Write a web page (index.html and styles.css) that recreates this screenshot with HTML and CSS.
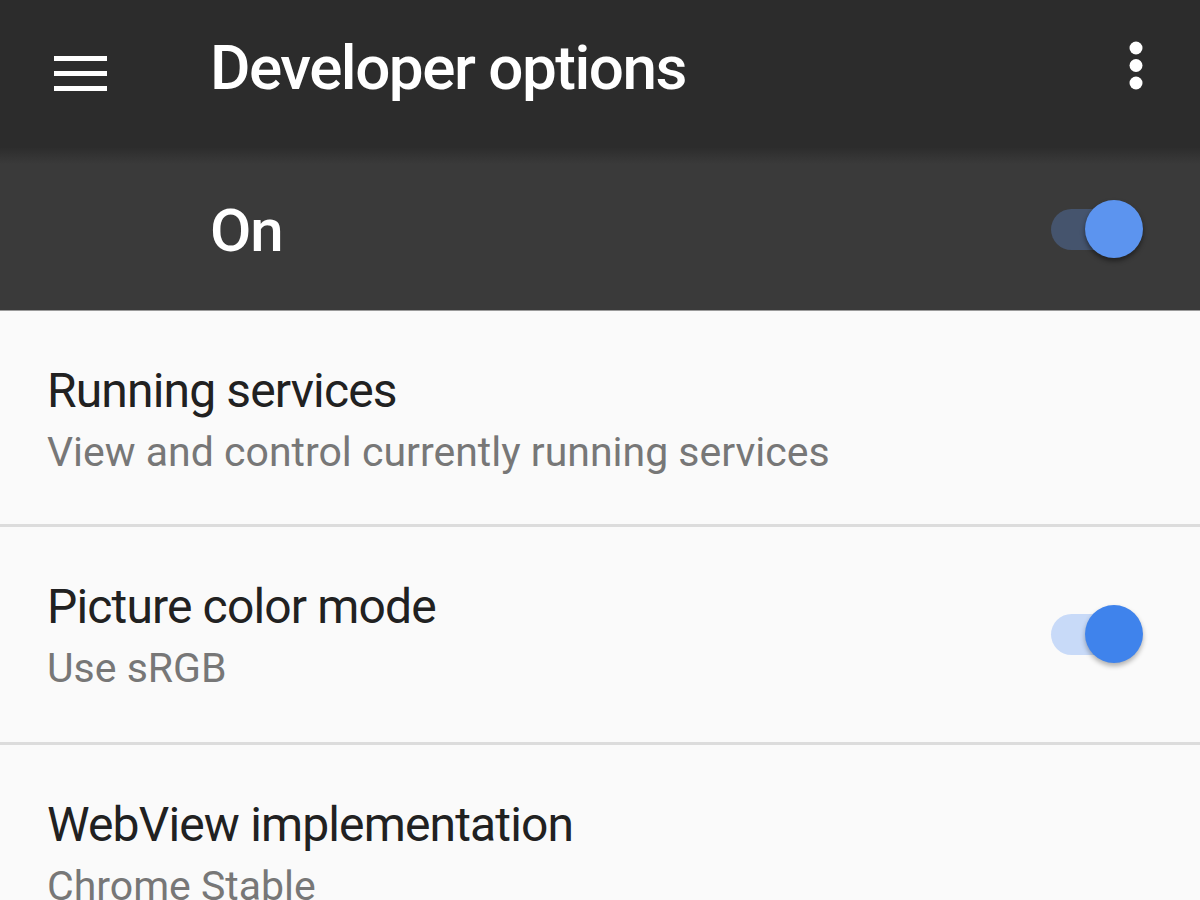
FILE: index.html
```html
<!DOCTYPE html>
<html lang="en">

<head>
    <meta charset="UTF-8">
    <meta name="viewport" content="width=device-width, initial-scale=1.0">
    <title>Developer options</title>
    <link rel="stylesheet" href="styles.css">
</head>

<body>
    <header class="toolbar">
        <div class="menu-icon">
            <span></span>
            <span></span>
            <span></span>
        </div>
        <h1 class="toolbar-title">Developer options</h1>
        <svg class="more-icon" width="16" height="52" viewBox="0 0 16 52">
            <circle cx="8" cy="8" r="6.5" fill="#fff"/>
            <circle cx="8" cy="25.5" r="6.5" fill="#fff"/>
            <circle cx="8" cy="43" r="6.5" fill="#fff"/>
        </svg>
    </header>

    <div class="master-bar">
        <span class="master-label">On</span>
        <div class="switch switch-dark">
            <div class="track"></div>
            <div class="thumb"></div>
        </div>
    </div>

    <ul class="prefs">
        <li class="pref">
            <div class="pref-text">
                <div class="pref-title">Running services</div>
                <div class="pref-summary">View and control currently running services</div>
            </div>
        </li>
        <li class="pref pref-switch">
            <div class="pref-text">
                <div class="pref-title">Picture color mode</div>
                <div class="pref-summary">Use sRGB</div>
            </div>
            <div class="switch switch-light">
                <div class="track"></div>
                <div class="thumb"></div>
            </div>
        </li>
        <li class="pref">
            <div class="pref-text">
                <div class="pref-title">WebView implementation</div>
                <div class="pref-summary">Chrome Stable</div>
            </div>
        </li>
    </ul>
</body>

</html>
```

FILE: styles.css
```css
* {
    margin: 0;
    padding: 0;
    box-sizing: border-box;
}

body {
    background-color: #fafafa;
    font-family: 'Roboto', 'Liberation Sans', sans-serif;
    width: 1200px;
    height: 900px;
    overflow: hidden;
}

/* top app bar */
.toolbar {
    height: 148px;
    background-color: #2c2c2c;
    display: flex;
    align-items: center;
    padding-left: 54px;
    padding-right: 56px;
}

.menu-icon {
    width: 53px;
    display: flex;
    flex-direction: column;
    gap: 10px;
    margin-top: -2px;
}

.menu-icon span {
    display: block;
    height: 5px;
    background-color: #ffffff;
}

.toolbar-title {
    color: #ffffff;
    font-size: 62px;
    font-weight: 500;
    letter-spacing: -1.5px;
    margin-left: 103px;
    flex: 1;
    margin-top: -14px;
}

.more-icon {
    margin-top: -16px;
}

/* master switch bar */
.master-bar {
    height: 163px;
    background: linear-gradient(to bottom, #2d2d2d 0, #3a3a3a 16px);
    display: flex;
    align-items: center;
    padding-left: 210px;
    padding-right: 57px;
    border-bottom: 1px solid #9a9a9a;
}

.master-label {
    color: #ffffff;
    font-size: 60px;
    font-weight: 500;
    letter-spacing: -1px;
    flex: 1;
    margin-top: 2px;
}

/* switches */
.switch {
    position: relative;
    width: 92px;
    height: 58px;
}

.switch .track {
    position: absolute;
    left: 0;
    top: 9px;
    width: 80px;
    height: 41px;
    border-radius: 21px;
}

.switch .thumb {
    position: absolute;
    right: 0;
    top: 0;
    width: 58px;
    height: 58px;
    border-radius: 50%;
    box-shadow: 0 3px 5px rgba(0, 0, 0, 0.3);
}

.switch-dark .track {
    background-color: #45546d;
}

.switch-dark .thumb {
    background-color: #5c94ef;
    box-shadow: 0 3px 5px rgba(0, 0, 0, 0.45);
}

.switch-light .track {
    background-color: #c8daf8;
}

.switch-light .thumb {
    background-color: #3f83ec;
}

/* preference list */
.prefs {
    list-style: none;
}

.pref {
    display: flex;
    align-items: center;
    padding: 49px 57px 42px 47px;
    border-bottom: 3px solid #dcdcdc;
}

.pref-switch {
    padding-bottom: 44px;
}

.pref .switch {
    margin-top: -6px;
}

.pref-text {
    flex: 1;
}

.pref-title {
    font-size: 48px;
    line-height: 62px;
    letter-spacing: -0.85px;
    color: #212121;
}

.pref-summary {
    font-size: 41px;
    line-height: 60px;
    color: #777777;
}
```
